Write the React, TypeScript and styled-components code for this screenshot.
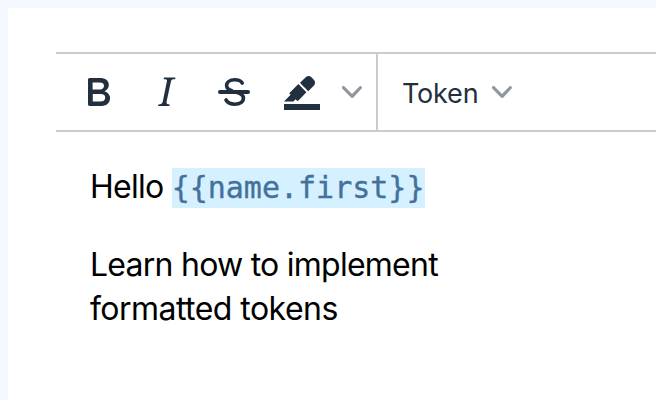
import React from "react";
import styled, { createGlobalStyle } from "styled-components";

const GlobalStyle = createGlobalStyle`
  * { box-sizing: border-box; }
  body {
    margin: 0;
    background: #f4f8ff;
    overflow: hidden;
    font-family: Inter, "Liberation Sans", sans-serif;
  }
`;

const Page = styled.div`
  height: 400px;
  padding: 8px 0 0 8px;
  overflow: hidden;
`;

const Panel = styled.main`
  height: 100%;
  padding: 44px 0 0 48px;
  background: #fff;
`;

const Toolbar = styled.div`
  display: flex;
  height: 80px;
  border-top: 2px solid #ccc;
  border-bottom: 2px solid #ccc;
`;

const Group = styled.div<{ $divided?: boolean }>`
  display: flex;
  align-items: center;
  flex: none;
  width: ${(p) => (p.$divided ? "322px" : "auto")};
  padding-left: ${(p) => (p.$divided ? "8px" : "24px")};
  border-right: ${(p) => (p.$divided ? "2px solid #ccc" : "none")};
`;

const ToolButton = styled.button`
  display: flex;
  align-items: center;
  justify-content: center;
  flex: none;
  width: 68px;
  height: 68px;
  padding: 0;
  border: 0;
  background: none;
  color: #222f3e;
`;

const MenuButton = styled(ToolButton)`
  width: auto;
  justify-content: flex-start;
`;

const ChevronButton = styled(ToolButton)`
  width: 32px;
`;

const MenuLabel = styled.span`
  width: 90px;
  padding-top: 3px;
  text-align: left;
  white-space: nowrap;
  font: 400 27px/34px Inter, sans-serif;
  letter-spacing: -0.2px;
`;

const Glyph = styled.svg`
  display: block;
  width: 48px;
  height: 48px;
  fill: currentColor;
`;

const ChevronGlyph = styled(Glyph)`
  width: 20px;
  height: 20px;
  fill: #9097a0;
`;

const Content = styled.div`
  width: 420px;
  padding: 33px 0 0 34px;
  color: #000;
  font-size: 32px;
  line-height: 44px;
`;

const Paragraph = styled.p`
  margin: 0 0 34px;
  white-space: nowrap;
`;

const Line = styled.span<{ $tracking: number }>`
  letter-spacing: ${(p) => p.$tracking}px;
`;

const Token = styled.code`
  display: inline-block;
  width: 253px;
  height: 40px;
  vertical-align: top;
  margin-top: 3px;
  background: #d5f0ff;
  color: #44719b;
  font: 30px/40px "DejaVu Sans Mono", monospace;
  letter-spacing: 0;
  -webkit-text-stroke: 0.35px #44719b;
`;

const Chevron = () => (
  <ChevronGlyph viewBox="0 0 10 10">
    <path d="M8.7 2.2c.3-.3.8-.3 1 0 .4.4.4.9 0 1.2L5.7 7.8c-.3.3-.9.3-1.2 0L.2 3.4a.8.8 0 0 1 0-1.2c.3-.3.8-.3 1.1 0L5 6l3.7-3.8z" />
  </ChevronGlyph>
);

export default function App() {
  return (
    <Page>
      <GlobalStyle />
      <Panel>
        <Toolbar>
          <Group $divided>
            <ToolButton aria-label="Bold">
              <Glyph viewBox="0 0 24 24" fillRule="evenodd">
                <path d="M7.8 19c-.3 0-.5 0-.6-.2l-.2-.5V5.7c0-.2 0-.4.2-.5l.6-.2h5c1.5 0 2.7.3 3.5 1 .7.6 1.1 1.4 1.1 2.5a3 3 0 0 1-.6 1.9c-.4.6-1 1-1.6 1.2.4.1.9.3 1.3.6s.8.7 1 1.2c.4.4.5 1 .5 1.6 0 1.3-.4 2.3-1.3 3-.8.7-2.1 1-3.8 1H7.8zm5-8.3c.6 0 1.2-.1 1.6-.5.4-.3.6-.7.6-1.3 0-1.1-.8-1.7-2.3-1.7H9.3v3.5h3.4zm.5 6c.7 0 1.3-.1 1.7-.4.4-.4.6-.9.6-1.5s-.2-1-.7-1.4c-.4-.3-1-.4-2-.4H9.4v3.8h4z" />
              </Glyph>
            </ToolButton>
            <ToolButton aria-label="Italic">
              <Glyph viewBox="0 0 24 24">
                <path d="m16.7 4.7-.1.9h-.3c-.6 0-1 0-1.4.3-.3.3-.4.6-.5 1.1l-2.1 9.8v.6c0 .5.4.8 1.4.8h.2l-.2.8H8l.2-.8h.2c1.1 0 1.8-.5 2-1.5l2-9.8.1-.5c0-.6-.4-.8-1.4-.8h-.3l.2-.9h5.8z" />
              </Glyph>
            </ToolButton>
            <ToolButton aria-label="Strikethrough">
              <Glyph viewBox="0 0 24 24">
                <path
                  d="M16.1 7.5C15.4 6.4 14 5.9 12.4 5.9c-2.5 0-4.1 1.1-4.1 2.9 0 1.3.8 2.1 2.6 2.6M13.6 12.2c2.1.6 3.1 1.5 3.1 2.8 0 1.9-1.7 3.1-4.3 3.1-2 0-3.6-.7-4.4-2.1"
                  fill="none"
                  stroke="currentColor"
                  strokeWidth="1.8"
                  strokeLinecap="round"
                />
                <path d="M5 11h14a1 1 0 0 1 0 2H5a1 1 0 0 1 0-2z" />
              </Glyph>
            </ToolButton>
            <ToolButton aria-label="Highlight color">
              <Glyph viewBox="0 0 24 24">
                <path d="M3 18h18v3H3z" />
                <path d="M7.7 16.7H3l3.3-3.3-.7-.8L10.2 8l4 4.1-4 4.2c-.2.2-.6.2-.8 0l-.6-.7-1.1 1.1zm5-7.5L11 7.4l3-2.9a2 2 0 0 1 2.6 0L18 6c.7.7.7 2 0 2.7l-2.9 2.9-1.8-1.8-.5-.6" />
              </Glyph>
            </ToolButton>
            <ChevronButton aria-label="Highlight options">
              <Chevron />
            </ChevronButton>
          </Group>
          <Group>
            <MenuButton>
              <MenuLabel>Token</MenuLabel>
              <Chevron />
            </MenuButton>
          </Group>
        </Toolbar>
        <Content>
          <Paragraph>
            <Line $tracking={-0.75}>Hello </Line>
            <Token>{"{{name.first}}"}</Token>
          </Paragraph>
          <Paragraph>
            <Line $tracking={-0.75}>Learn how to implement</Line>
            <br />
            <Line $tracking={-0.54}>formatted tokens</Line>
          </Paragraph>
        </Content>
      </Panel>
    </Page>
  );
}
